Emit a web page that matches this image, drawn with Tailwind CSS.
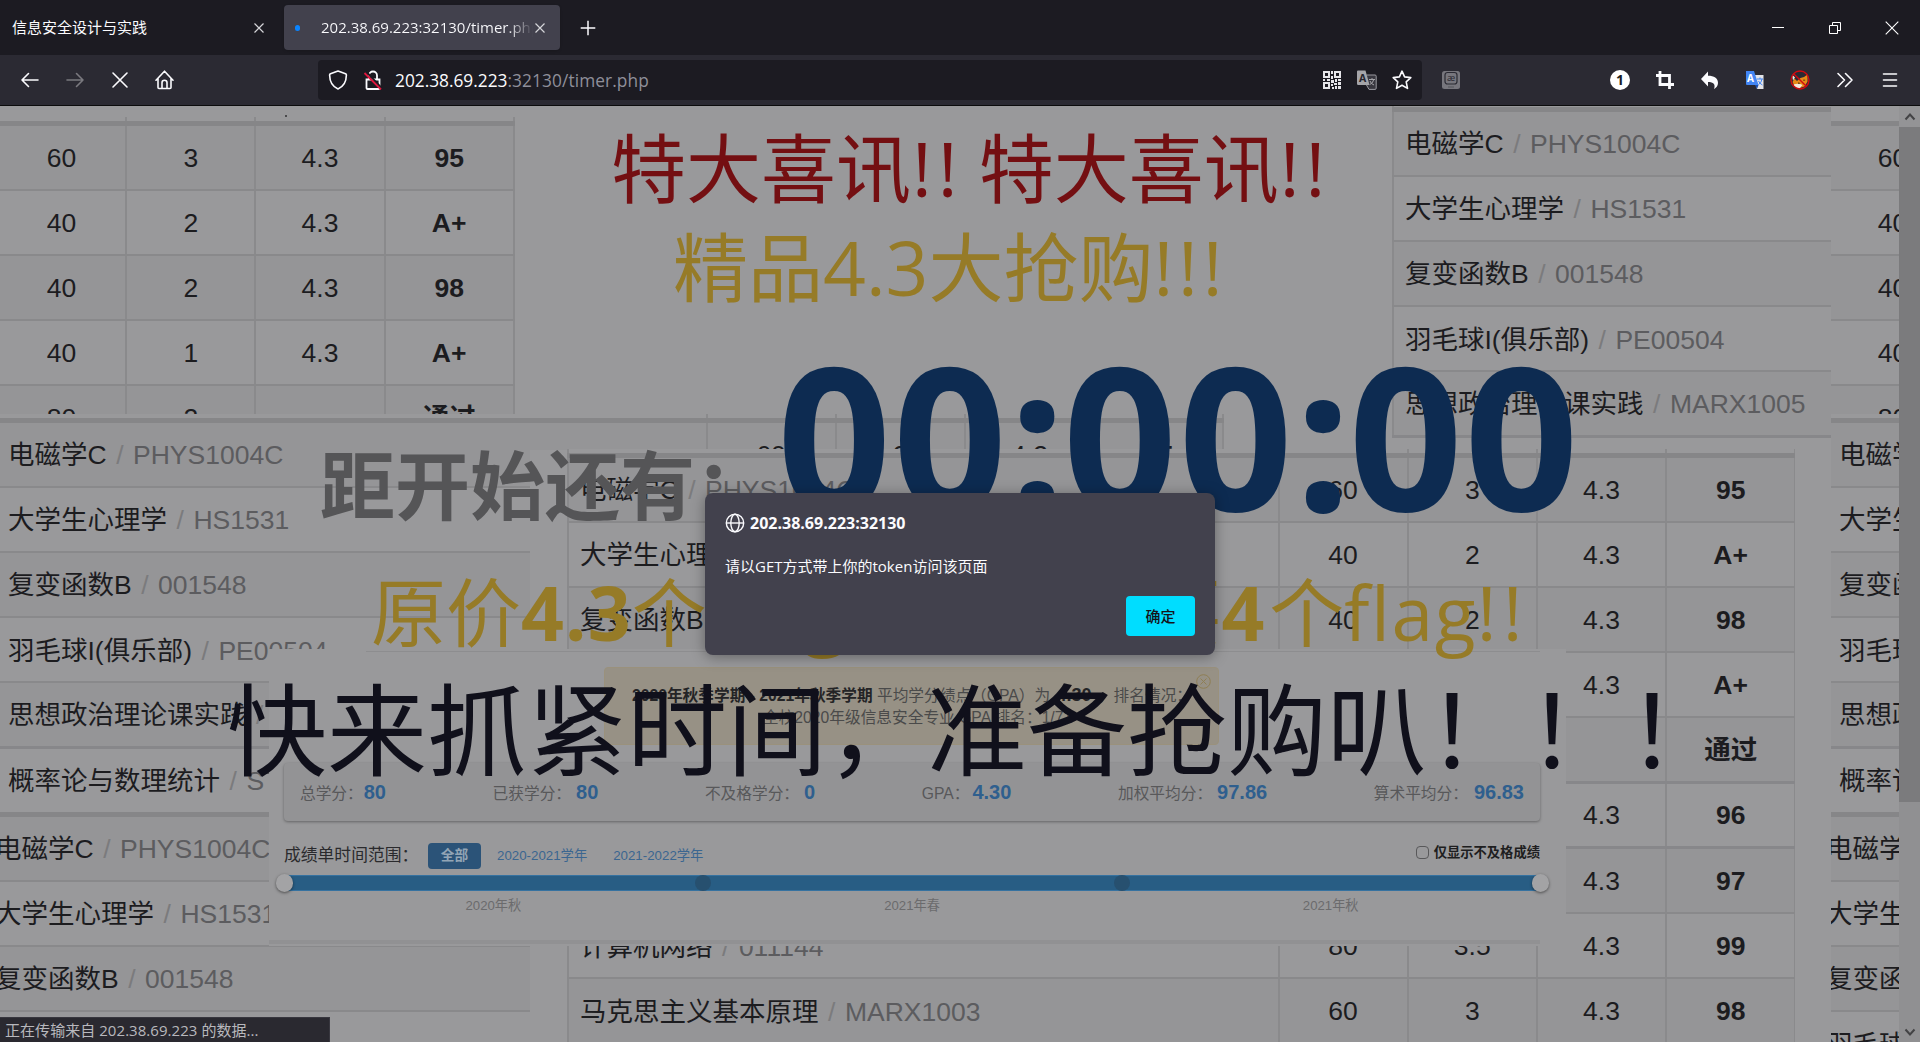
<!DOCTYPE html>
<html lang="zh-CN">
<head>
<meta charset="utf-8">
<title>202.38.69.223:32130/timer.php</title>
<script src="https://cdn.jsdelivr.net/npm/@tailwindcss/browser@4"></script>
</head>
<body class="w-[1920px] h-[1042px] overflow-hidden flex flex-col bg-[#1c1b22] text-[#fbfbfe] font-['Open_Sans','Noto_Sans_CJK_SC',sans-serif]">

<!-- tab strip -->
<header class="h-[55px] shrink-0 flex items-center">
  <div class="w-[284px] h-[45px] flex items-center justify-between pl-[12px] pr-[19px]">
    <span class="text-[15px] leading-5 mb-[2px]">信息安全设计与实践</span>
    <svg class="w-3 h-3" viewBox="0 0 12 12" stroke="#d5d5d9" stroke-width="1.2"><path d="M1.5 1.5l9 9M10.5 1.5l-9 9"/></svg>
  </div>
  <div class="w-[276px] h-[45px] rounded bg-[#42414d] flex items-center pl-[11px] pr-[14px] shadow">
    <span class="w-[5px] h-[6px] rounded-full bg-[#0a84ff] shrink-0"></span>
    <span class="ml-[21px] mb-[2px] w-[212px] overflow-hidden whitespace-nowrap text-[15px] leading-5 bg-linear-to-r from-[#fbfbfe] from-88% to-transparent bg-clip-text text-transparent">202.38.69.223:32130/timer.php</span>
    <svg class="w-3 h-3 shrink-0 ml-px" viewBox="0 0 12 12" stroke="#d5d5d9" stroke-width="1.2"><path d="M1.5 1.5l9 9M10.5 1.5l-9 9"/></svg>
  </div>
  <svg class="w-4 h-4 ml-[20px]" viewBox="0 0 16 16" stroke="#fbfbfe" stroke-width="1.5"><path d="M8 .7v14.6M.7 8h14.6"/></svg>
  <div class="ml-auto flex items-center gap-[43px] pr-[21px]">
    <svg class="w-[14px] h-[14px]" viewBox="0 0 14 14" stroke="#fff" stroke-width="1"><path d="M1 6.5h12"/></svg>
    <svg class="w-[14px] h-[14px]" viewBox="0 0 14 14" fill="none" stroke="#fff" stroke-width="1"><path d="M1.5 4.5h8v8h-8zM4.500 4.500v-3h8v8h-3"/></svg>
    <svg class="w-[14px] h-[14px]" viewBox="0 0 14 14" stroke="#fff" stroke-width="1.1"><path d="M.7.700l12.600 12.600M13.300.700L.7 13.300"/></svg>
  </div>
</header>

<!-- navigation bar -->
<nav class="h-[51px] shrink-0 bg-[#2b2a33] border-b border-[#0c0c0d] flex items-center">
  <div class="w-[318px] flex items-center pl-[20px] gap-[25px]">
    <svg class="w-5 h-5" viewBox="0 0 20 20" fill="none" stroke="#fbfbfe" stroke-width="1.6" stroke-linecap="round" stroke-linejoin="round"><path d="M18 10H2M8.500 3.500L2 10l6.500 6.500"/></svg>
    <svg class="w-5 h-5" viewBox="0 0 20 20" fill="none" stroke="#7a797f" stroke-width="1.6" stroke-linecap="round" stroke-linejoin="round"><path d="M2 10h16M11.500 3.500L18 10l-6.500 6.500"/></svg>
    <svg class="w-5 h-5" viewBox="0 0 20 20" fill="none" stroke="#fbfbfe" stroke-width="1.600" stroke-linecap="round"><path d="M3 3l14 14M17 3L3 17"/></svg>
    <svg class="w-5 h-5" viewBox="0 0 20 20" fill="none" stroke="#fbfbfe" stroke-width="1.600" stroke-linecap="round" stroke-linejoin="round"><path d="M1 10.200L9.500 1.200l8.500 9M3 8.500v9a1 1 0 001 1h11a1 1 0 001-1v-9M7 18.300v-5.600a2.500 2.500 0 015 0v5.600"/></svg>
  </div>
  <div class="w-[1104px] h-10 rounded bg-[#1c1b22] flex items-center pl-[10px] pr-[10px]">
    <svg class="w-5 h-5" viewBox="0 0 20 20" fill="none" stroke="#fbfbfe" stroke-width="1.600" stroke-linejoin="round"><path d="M10 1l7.500 2.800c.600.300.900.700.900 1.300C18.300 11 16 16.500 10 19 4 16.500 1.700 11 1.600 5.100c0-.600.300-1 .9-1.300z"/></svg>
    <svg class="w-5 h-5 ml-[15px]" viewBox="0 0 20 20" fill="none" stroke="#fbfbfe" stroke-width="1.800"><path d="M6 9V5.500a4 4 0 018 0V9M3.500 9.500h13v8.500a1 1 0 01-1 1h-11a1 1 0 01-1-1z"/><path d="M3.500 2l15 16" stroke="#1c1b22" stroke-width="2"/><path d="M1.500 3l16.500 16.500" stroke="#e2173f" stroke-width="1.800"/></svg>
    <span class="ml-[12px] mt-px text-[17.300px] leading-6 text-[#fbfbfe]">202.38.69.223<span class="text-[#8f8f9a] tracking-[0.100px]">:32130/timer.php</span></span>
    <div class="ml-auto flex items-center gap-[15px]">
      <svg class="w-5 h-5" viewBox="0 0 20 20" fill="#e6e6ea"><path fill-rule="evenodd" d="M1 1h7v7H1zM3 3v3h3V3zM12 1h7v7h-7zM14 3v3h3V3zM1 12h7v7H1zM3 14v3h3v-3z"/><path d="M9 1h2v3H9zM9 6h2v3H9zM1 9h2v2H1zM5 9h3v2H5zM9 10h3v3H9zM13 9h2v3h-2zM16 9h3v2h-3zM12 13h3v2h-3zM16 12h3v3h-3zM9 14h2v2H9zM13 16h2v3h-2zM10 17h2v2h-2zM16 16h3v3h-3z"/></svg>
      <svg class="w-5 h-5" viewBox="0 0 20 20"><path d="M9.500 5H18a1.200 1.200 0 011.200 1.200v12A1.200 1.200 0 0118 19.400h-6L9.500 15" fill="#38373f" stroke="#9a9aa0"/><path d="M0 1.500a1 1 0 011-1h7.500L12.500 15H1.200A1.200 1.200 0 010 13.800z" fill="#a5a5a9"/><text x="2" y="12" font-size="10.500" font-weight="700" fill="#26252d">A</text><path d="M12 9.500h6M15 8v1.500M16.800 9.500q-1 4-4 5M13 11q1 3 4 4" stroke="#a5a5a9" fill="none"/></svg>
      <svg class="w-5 h-5" viewBox="0 0 20 20" fill="none" stroke="#fbfbfe" stroke-width="1.600" stroke-linejoin="round"><path d="M10 1.200l2.600 5.700 6.200.700-4.600 4.200 1.300 6.600L10 15.200l-5.500 3.200 1.300-6.600L1.200 7.600l6.200-.7z"/></svg>
    </div>
  </div>
  <svg class="ml-[20px] w-[18px] h-[18px]" viewBox="0 0 18 18"><rect width="18" height="18" rx="2.500" fill="#77767d"/><rect x="3" y="1.500" width="12" height="11.500" rx="2.500" fill="none" stroke="#2b2a33" stroke-width="1.200"/><text x="9" y="10.300" text-anchor="middle" font-size="9.500" fill="#2b2a33">æ</text><path d="M6 16h6" stroke="#55545b"/></svg>
  <div class="ml-auto pr-[20px] flex items-center gap-[25px]">
    <div class="w-5 h-5 rounded-full bg-white text-[#1c1b22] text-[14px] font-bold leading-5 text-center">1</div>
    <svg class="w-5 h-5" viewBox="0 0 20 20" fill="none" stroke="#fbfbfe" stroke-width="2.800"><path d="M5 1v13.500h14M1 5.500h13.500V19"/></svg>
    <svg class="w-5 h-5" viewBox="0 0 20 20" fill="#fbfbfe"><path d="M8 1.500v4.300c6 0 10 2.200 10 7.200 0 3-2 5-4 6 1.800-4.500-.5-7-6-7v4.500L1 9z"/></svg>
    <svg class="w-5 h-5" viewBox="0 0 20 20"><path d="M8 5h10.500v14H12z" fill="#e4e4e8"/><path d="M1 1h8l4.500 14H2a1 1 0 01-1-1z" fill="#4285f4"/><path d="M10 15h3.500L12 19z" fill="#1b4fae"/><text x="2" y="11.500" font-size="10" font-weight="700" fill="#fff">A</text><path d="M12 9h6M15 7.500V9M17 9q-.500 4-3.500 5.500M13.500 11q1 2.500 4 4" stroke="#4285f4" fill="none"/></svg>
    <svg class="w-5 h-5" viewBox="0 0 20 20"><path d="M2 5l2.500 3.500L2.500 12l2 4 5 2 5-1.500 3-5V4.500L14 7l-3.500 1L7 11 4 8z" fill="#e88a17"/><path d="M2 4.500l3 3-2 3zM3.500 14.500q5-1.500 9 .5l-3 3.500-4-1z" fill="#f4e9dc"/><path d="M8 12.500l2.500.500-2 1zM13.500 9.500l2 .500-2 1z" fill="#2b1a10"/><circle cx="10" cy="10" r="9" fill="none" stroke="#d20a10" stroke-width="1.400"/><path d="M3.700 3.700l12.600 12.600" stroke="#d20a10" stroke-width="1.400"/></svg>
    <svg class="w-5 h-5" viewBox="0 0 20 20" fill="none" stroke="#fbfbfe" stroke-width="1.600" stroke-linecap="round" stroke-linejoin="round"><path d="M3 3.500l6.500 6.500L3 16.500M10.500 3.500L17 10l-6.500 6.500"/></svg>
    <svg class="w-5 h-5" viewBox="0 0 20 20" stroke="#fbfbfe" stroke-width="1.600" stroke-linecap="round"><path d="M3.500 4h13M3.500 10h13M3.500 16h13"/></svg>
  </div>
</nav>

<!-- page -->
<div class="flex-1 min-h-0 flex">
  <main class="relative w-[1899px] h-full overflow-hidden bg-[#99999b]">
    <!-- overlapping transcript collage; repeats every 1831px -->
    <div class="absolute left-0 top-0 w-[1831px] h-full overflow-hidden font-['Liberation_Sans','Noto_Sans_CJK_SC',sans-serif]">
      <div id="tile"></div>

      <section class="absolute left-[269px] top-[543px] w-[1297px] h-[297px] bg-[#99999b] text-[#5a5a5c]">
        <div class="ml-[97px] mr-[26px] h-[3px] border-b border-[#8d8d8f]"></div>
        <div class="relative ml-[335px] mt-[15px] w-[615px] h-[78px] border border-[#9a917c] rounded-sm bg-[#979185] pt-[16px] text-[15.700px] leading-[22px] text-[#4a4a4a] whitespace-nowrap">
          <div class="pl-[27px]"><b class="text-[#242426]">2020年秋季学期</b> - <b class="text-[#242426]">2021年秋季学期</b> 平均学分绩点（GPA）为 <b class="text-[#242426] text-[18px] mx-[2px]">4.30</b> ，排名情况：</div>
          <div class="pl-[158px]">全校2020年级信息安全专业 GPA 排名：1/71</div>
          <svg class="absolute right-[7px] top-[6px] w-[15px] h-[15px]" viewBox="0 0 15 15" fill="none" stroke="#8f7f55"><circle cx="7.500" cy="7.500" r="6.800"/><path d="M4.500 4.500l6 6M10.500 4.500l-6 6"/></svg>
        </div>
        <div class="mt-[18px] ml-[15px] w-[1256px] h-[58px] rounded bg-[#939395] shadow-[0_1px_3px_rgba(0,0,0,0.35)] px-[16px] flex items-center justify-between text-[15.700px] text-[#58585a]">
          <span>总学分：<b class="text-[20px] text-[#2f5f8e] ml-px">80</b></span>
          <span>已获学分：<b class="text-[20px] text-[#2f5f8e] ml-[5px]">80</b></span>
          <span>不及格学分：<b class="text-[20px] text-[#2f5f8e] ml-[5px]">0</b></span>
          <span>GPA：<b class="text-[20px] text-[#2f5f8e] ml-[3px]">4.30</b></span>
          <span>加权平均分：<b class="text-[20px] text-[#2f5f8e] ml-[5px]">97.86</b></span>
          <span>算术平均分：<b class="text-[20px] text-[#2f5f8e] ml-[6px]">96.83</b></span>
        </div>
        <div class="mt-[21px] mx-[15px] w-[1256px] h-[27px] flex items-center">
          <span class="w-[144px] text-[16.800px] text-[#2a2a2d]">成绩单时间范围：</span>
          <span class="w-[53px] h-[26px] rounded bg-[#2b5378] text-[#93a5b5] text-[13.700px] font-bold leading-[26px] text-center">全部</span>
          <span class="ml-[16px] text-[13.300px] text-[#3b6690]">2020-2021学年</span>
          <span class="ml-[26px] text-[13.300px] text-[#3b6690]">2021-2022学年</span>
          <span class="ml-auto mb-[6px] w-[13px] h-[13px] rounded-sm border border-[#58585a]"></span>
          <span class="ml-[5px] mb-[5px] text-[13.300px] font-bold text-[#1e1e20]">仅显示不及格成绩</span>
        </div>
        <div class="mt-[5px] ml-[7px] w-[1273px] h-[18px] flex items-center justify-between rounded-full">
          <i class="w-[17px] h-[18px] rounded-full bg-[#a3a3a5] shadow-[0_1px_3px_rgba(0,0,0,0.5)] z-10"></i>
          <div class="flex-1 -mx-[8px] h-4 bg-[#285d84] border-y border-[#3672a0] flex items-center justify-between px-[410px]"><i class="w-4 h-4 rounded-full bg-[#27506f]"></i><i class="w-4 h-4 rounded-full bg-[#27506f]"></i></div>
          <i class="w-[17px] h-[18px] rounded-full bg-[#a3a3a5] shadow-[0_1px_3px_rgba(0,0,0,0.5)] z-10"></i>
        </div>
        <div class="ml-[15px] mt-[4px] w-[1256px] grid grid-cols-3 text-center text-[13.200px] leading-[20px] text-[#6b6b6d]"><span>2020年秋</span><span>2021年春</span><span>2021年秋</span></div>
        <div class="absolute left-0 bottom-[2px] w-[1271px] h-1 bg-[#919193]"></div>
      </section>
    </div>
    <div id="strip" class="absolute left-[1831px] top-0 w-[68px] h-full overflow-hidden bg-[#99999b] font-['Liberation_Sans','Noto_Sans_CJK_SC',sans-serif]"></div>

    <!-- countdown banner -->
    <div class="absolute inset-0 pt-[13px] flex flex-col whitespace-nowrap">
      <div class="h-[99px] leading-[99px] pl-[611px] text-[75px] text-[#740f12]">特大喜讯<span class="tracking-[6px] pl-px">!!</span><span class="tracking-[-4.500px]"> </span>特大喜讯<span class="tracking-[6px] pl-px">!!</span></div>
      <div class="h-[99px] leading-[99px] pl-[673px] text-[75px] text-[#967b27]">精品4.3大抢购<span class="tracking-[4.800px]">!!!</span></div>
      <div class="h-[247px] flex items-center pl-[320px]">
        <span class="w-[457px] mt-[90px] leading-[99px] text-[75px] font-bold text-[#555557]">距开始还有：</span>
        <span class="-mt-[14px] leading-[247px] text-[200px] font-bold tracking-[1.500px] text-[#0d2b51]">00<span class="tracking-[-3px]">:</span>00<span class="tracking-[-3px]">:</span>00</span>
      </div>
      <div class="h-[99px] leading-[97px] pl-[371px] text-[75px] text-[#967b27]">原价<b class="tracking-[1.200px]">4.3</b>个<b>flag</b>，现在只要<b class="tracking-[5px]">4</b>个<span class="tracking-[1.500px]">flag</span><span class="tracking-[6px]">!!</span></div>
      <div class="h-[135px] leading-[133px] pl-[227px] text-[100px] text-[#10101b]">快来抓紧时间，准备抢购叭！！！</div>
    </div>

    <!-- alert -->
    <div class="absolute left-[705px] top-[387px] w-[510px] h-[162px] rounded-lg bg-[#42414d] shadow-[0_2px_14px_rgba(0,0,0,0.35)] px-[20px] pt-[19px] flex flex-col text-[15px]">
      <div class="flex items-center gap-[5px] font-bold text-[16px] leading-[22px]">
        <svg class="w-5 h-5" viewBox="0 0 20 20" fill="none" stroke="#fbfbfe" stroke-width="1.400"><circle cx="10" cy="10" r="8.700"/><ellipse cx="10" cy="10" rx="4.200" ry="8.700"/><path d="M1.500 10h17"/></svg>
        <span>202.38.69.223:32130</span>
      </div>
      <p class="mt-[21px] leading-[22px]">请以GET方式带上你的token访问该页面</p>
      <button class="mt-[19px] self-end w-[69px] h-10 rounded bg-[#00ddff] text-[#15141a] font-medium leading-[38px]">确定</button>
    </div>

    <!-- status -->
    <div class="absolute left-0 bottom-0 w-[330px] h-[25px] bg-[#2a2930] border-t border-r border-[#38373f] pl-[5px] leading-[24px] text-[15px] tracking-[0.050px] text-[#b8b8bd]">正在传输来自 202.38.69.223 的数据...</div>
  </main>
  <!-- scrollbar -->
  <aside class="w-[21px] bg-[#909092] flex flex-col">
    <div class="h-[21px] bg-[#949496] flex items-center justify-center"><svg class="w-3 h-3" viewBox="0 0 12 12" fill="none" stroke="#434345" stroke-width="2"><path d="M1.500 8.500L6 3.500l4.500 5"/></svg></div>
    <div class="h-[675px] bg-[#7b7b7d]"></div>
    <div class="mt-auto h-[21px] flex items-center justify-center"><svg class="w-3 h-3" viewBox="0 0 12 12" fill="none" stroke="#434345" stroke-width="2"><path d="M1.500 3.500L6 8.500l4.500-5"/></svg></div>
  </aside>
</div>

<script>
const course = ([n, c]) => `<span>${n}</span><span class="mx-[9.500px] text-[#7b7b7d]">/</span><span class="text-[#5c5c5f]">${c}</span>`;
const cell = (t, b) => `<div class="w-[129.200px] shrink-0 border-l-2 border-[#8a8a8c] pt-px flex items-center justify-center ${b ? 'font-bold' : ''}">${t}</div>`;
const name = t => `<div class="w-[710.500px] shrink-0 border-l-2 border-[#8a8a8c] pl-[11px] pt-[2px] flex items-center">${t}</div>`;

// pos: placement classes; rows: [course|null, hours, credit, gpa, grade, heavyLine]
function table(pos, rows, named, scored) {
  let h = `<div class="${pos} absolute overflow-hidden whitespace-nowrap bg-[#99999b] text-[26.500px] leading-[30px] text-[#1c1c1f]">`;
  const width = named ? (scored ? 'w-[1229px]' : 'w-full') : 'w-[519px]';
  const line = (r, cls) => `<div class="${cls} ${width} flex">` + (named ? name(r[0] ? course(r[0]) : '') : '') +
    (scored ? cell(r[1]) + cell(r[2]) + cell(r[3]) + cell(r[4], true) + '<div class="w-[2px] shrink-0 bg-[#8a8a8c]"></div>' : '') + '</div>';
  h += line([null, '', '', '', ''], 'h-[9px] border-b-[5px] border-[#868688]');
  rows.forEach((r, i) => {
    h += line(r, (i ? 'h-[65.250px] ' : 'h-[64.500px] ') + (i % 2 ? 'bg-[#99999b] ' : 'bg-[#959597] ') + (r[5] ? 'border-b-3 border-[#87878a]' : 'border-b-2 border-[#89898b]'));
  });
  return h + '</div>';
}
const R = [
  [['电磁学C', 'PHYS1004C'], 60, 3, '4.3', 95],
  [['大学生心理学', 'HS1531'], 40, 2, '4.3', 'A+'],
  [['复变函数B', '001548'], 40, 2, '4.3', 98],
  [['羽毛球I(俱乐部)', 'PE00504'], 40, 1, '4.3', 'A+'],
  [['思想政治理论课实践', 'MARX1005'], 80, 2, '', '通过', true],
  [['概率论与数理统计', 'ST1001'], 80, 4, '4.3', 96, true],
  [['线性代数', '001549'], 80, 4, '4.3', 97],
  [['计算机网络', '011144'], 80, '3.5', '4.3', 99],
  [['马克思主义基本原理', 'MARX1003'], 60, 3, '4.3', 98],
];
const left = table('left-[-4px] top-[11px] w-[519px] h-[297px]', R.slice(0, 5), false, true)
  + table('left-[-5px] top-[308px] w-[1229px] h-[399px]', R.slice(0, 6), true, true)
  + table('left-[-18px] top-[702px] w-[549px] h-[240px]', R.slice(0, 4), true, false);
document.getElementById('tile').innerHTML = left
  + '<div class="absolute left-[285px] top-[9px] w-[2px] h-[2px] bg-[#4a4a4c]"></div>'
  + table('left-[1392px] top-[-3px] w-[439px] h-[347px]', R.slice(0, 5), true, false)
  + '<div class="absolute left-[530px] top-[344px] w-[1301px] h-[592px] bg-[#99999b]"></div>'
  + table('left-[567px] top-[343px] w-[1228px] h-[600px]', R, true, true);
document.getElementById('strip').innerHTML = left;
</script>
</body>
</html>
